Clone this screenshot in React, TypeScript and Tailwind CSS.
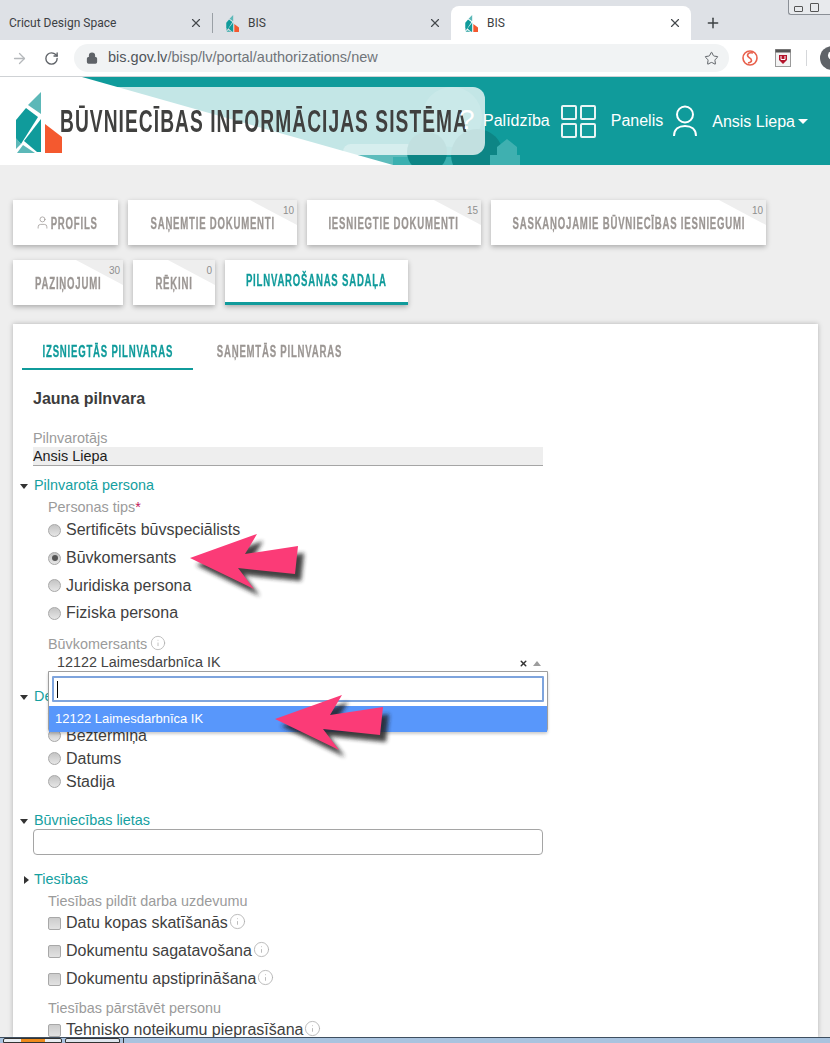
import React from "react";
import { ArrowRight, RotateCw, Lock, Star, X, Plus, Info, User } from "lucide-react";

const arial = "font-['Liberation_Sans',Arial,sans-serif]";

function Logo({ w, h }: { w: number; h: number }) {
  return (
    <svg width={w} height={h} viewBox="0 0 47 61" className="block shrink-0">
      <path d="M26 0V22L13 13Z" fill="#5cb8b8" />
      <path d="M11 16L1 28V47L6 52L23 25Z" fill="#109b9b" />
      <path d="M26 27V60H22L9 49Z" fill="#109b9b" />
      <path d="M1 46L6 52L1 57Z" fill="#5cb8b8" />
      <path d="M2 61L8 53L20 61Z" fill="#5cb8b8" />
      <path d="M30 32L47 45V61H30Z" fill="#f4592f" />
    </svg>
  );
}

function BrowserTab({ label, icon, active, divider, w }: { label: string; icon?: boolean; active?: boolean; divider?: boolean; w: string }) {
  return (
    <div className={`relative flex h-[34px] items-center pl-[9px] pr-[9px] ${w} ${active ? "rounded-t-lg bg-white" : ""}`}>
      {divider && <div className="absolute left-0 top-[7px] h-[20px] w-px bg-[#9aa0a6]" />}
      {icon && (
        <span className="ml-[5px] mr-[9px]">
          <Logo w={13} h={17} />
        </span>
      )}
      <span className="flex-1 font-['Roboto',sans-serif] text-[12px] text-[#3c4043]">{label}</span>
      <X size={14} strokeWidth={2} className="shrink-0 text-[#45494d]" />
    </div>
  );
}

function Cond({ children, className = "" }: { children: React.ReactNode; className?: string }) {
  return <span className={`inline-block scale-x-[0.6] whitespace-nowrap [-webkit-text-stroke:0.3px] ${className}`}>{children}</span>;
}

function Tile({ label, badge, active, w, icon }: { label: string; badge?: string; active?: boolean; w: string; icon?: boolean }) {
  return (
    <div
      className={`relative flex h-[45px] items-center justify-center overflow-hidden bg-white shadow-[0_2px_5px_rgba(0,0,0,0.28)] ${w} ${
        active ? "border-b-[3px] border-[#109b9b] text-[#109b9b]" : "text-[#9b9693]"
      } text-[16px] font-bold tracking-[1.3px]`}
    >
      {badge && (
        <>
          <svg className="absolute right-0 top-0" width="47" height="25" viewBox="0 0 47 25">
            <path d="M0 0H47V25Z" fill="#eeeeee" />
          </svg>
          <span className="absolute right-[3px] top-[3px] text-[10px] font-normal tracking-normal text-[#8f8f8f]">{badge}</span>
        </>
      )}
      {icon ? (
        <span className="flex items-center pt-[2px]">
          <User size={15} strokeWidth={1.2} className="mb-[2px] mr-[2px] shrink-0" />
          <span className="flex w-[45px] justify-center">
            <Cond>{label}</Cond>
          </span>
        </span>
      ) : (
        <span className={`flex justify-center ${active ? "" : "pt-[2px]"}`}>
          <Cond>{label}</Cond>
        </span>
      )}
    </div>
  );
}

function Section({ label, open = true, className }: { label: string; open?: boolean; className: string }) {
  return (
    <div className={`-ml-[2px] flex items-center ${className}`}>
      <span className="flex w-[14px] items-center">
        {open ? (
          <span className="h-0 w-0 border-x-[4px] border-t-[5px] border-x-transparent border-t-[#333]" />
        ) : (
          <span className="ml-[4px] h-0 w-0 border-y-[4px] border-l-[5px] border-y-transparent border-l-[#333]" />
        )}
      </span>
      <span className="text-[14.4px] text-[#15a0a0]">{label}</span>
    </div>
  );
}

function Radio({ label, checked, h = "h-[28px]" }: { label: string; checked?: boolean; h?: string }) {
  return (
    <div className={`flex items-center pl-[15px] ${h}`}>
      <span className="flex h-[13px] w-[13px] shrink-0 items-center justify-center rounded-full border border-[#a8a8a8] bg-gradient-to-b from-[#c4c4c4] to-[#e6e6e6]">
        {checked && <span className="h-[6px] w-[6px] rounded-full bg-[#555]" />}
      </span>
      <span className="ml-[5px] text-[16px] text-[#3f3f3f]">{label}</span>
    </div>
  );
}

function Check({ label, h = "h-[28px]" }: { label: string; h?: string }) {
  return (
    <div className={`flex items-center pl-[15px] ${h}`}>
      <span className="h-[13px] w-[13px] shrink-0 rounded-[2px] border border-[#a8a8a8] bg-gradient-to-b from-[#cccccc] to-[#e2e2e2]" />
      <span className="ml-[5px] text-[16px] text-[#3f3f3f]">{label}</span>
      <Info size={17} strokeWidth={1.2} className="mb-[3px] ml-[1px] shrink-0 text-[#b0b0b0]" />
    </div>
  );
}

function PinkArrow({ className }: { className: string }) {
  return (
    <svg className={`absolute ${className}`} width="130" height="80" viewBox="0 0 130 80">
      <defs>
        <filter id="blurArrow" x="-20%" y="-20%" width="140%" height="140%">
          <feGaussianBlur stdDeviation="2" />
        </filter>
      </defs>
      <path d="M5 28L72 4L60 24L113 16L110 44L53 38L69 59Z" transform="translate(6 7)" fill="#222" opacity="0.85" filter="url(#blurArrow)" />
      <path d="M5 28L72 4L60 24L113 16L110 44L53 38L69 59Z" fill="#fb3b77" />
    </svg>
  );
}

const label14 = "text-[14.4px] text-[#9b9b9b]";

export default function App() {
  return (
    <div className={`flex h-[1043px] w-[830px] flex-col overflow-hidden bg-[#eeeeee] ${arial}`}>
      {/* tab strip */}
      <div className="relative flex h-[40px] shrink-0 items-end bg-[#dee1e6]">
        <BrowserTab label="Cricut Design Space" w="w-[212px]" />
        <BrowserTab label="BIS" icon divider w="w-[239px]" />
        <BrowserTab label="BIS" icon active w="w-[240px]" />
        <div className="flex h-[34px] items-center pl-[14px]">
          <Plus size={16} strokeWidth={2.2} className="text-[#3c4043]" />
        </div>
        <div className="absolute right-0 top-0 flex h-[15px] w-[42px] rounded-bl-[3px] border-b border-l border-[#8a8f96] bg-[#e8eaed] pl-[5px] pt-[3px]">
          <span className="mt-[3px] h-[6px] w-[9px] rounded-[1px] border border-[#555]" />
          <span className="ml-[7px] h-[9px] w-[9px] rounded-[1px] border border-[#555]" />
        </div>
      </div>

      {/* toolbar */}
      <div className="flex h-[36px] shrink-0 items-center overflow-hidden bg-white">
        <ArrowRight size={17} strokeWidth={1.8} className="ml-[11px] shrink-0 text-[#b5b8bb]" />
        <RotateCw size={15} strokeWidth={2.2} className="ml-[16px] shrink-0 text-[#5f6368]" />
        <div className="ml-[15px] flex h-[28px] w-[655px] shrink-0 items-center rounded-full bg-[#f1f3f4] pl-[12px] pr-[10px]">
          <Lock size={12} strokeWidth={2.5} fill="#5f6368" className="shrink-0 text-[#5f6368]" />
          <span className="ml-[10px] flex-1 text-[14.5px] text-[#50555a]">
            bis.gov.lv<span className="text-[#70757a]">/bisp/lv/portal/authorizations/new</span>
          </span>
          <Star size={15} strokeWidth={1.6} className="shrink-0 text-[#5f6368]" />
        </div>
        <svg className="ml-[13px] shrink-0" width="16" height="18" viewBox="0 0 16 18">
          <circle cx="8" cy="9" r="7" fill="none" stroke="#e8604c" strokeWidth="1.6" />
          <path d="M11 4C6 3 4 6 7 8.500C10 10 11 13 6 14" fill="none" stroke="#e8604c" strokeWidth="1.6" />
        </svg>
        <svg className="ml-[17px] shrink-0" width="16" height="18" viewBox="0 0 16 18">
          <rect x="0.5" y="0.5" width="15" height="17" fill="#f3f3f3" stroke="#9a9a9a" />
          <rect x="0.500" y="0.5" width="15" height="3" fill="#555" />
          <path d="M4 6H12V11L8 15L4 11Z" fill="#b3142c" />
          <path d="M6 7V10.5H10V7" fill="none" stroke="#fff" />
        </svg>
        <div className="ml-[15px] h-[16px] w-px shrink-0 bg-[#d5d7da]" />
        <div className="ml-[13px] flex h-[24px] w-[24px] shrink-0 items-start justify-center overflow-hidden rounded-full bg-[#5f6368]">
          <span className="mt-[5px] h-[9px] w-[9px] rounded-full bg-white" />
        </div>
      </div>
      <div className="h-[1px] shrink-0 bg-[#cfd2d5]" />

      {/* header */}
      <div className="relative flex h-[88px] shrink-0 items-center overflow-hidden bg-[#109b9b]">
        <svg className="absolute inset-0" width="830" height="88" viewBox="0 0 830 88">
          <circle cx="452" cy="40" r="30" fill="#2ea8a8" />
          <rect x="343" y="67" width="100" height="30" rx="8" fill="#5dbcbc" />
          <rect x="393" y="80" width="127" height="8" fill="#3ab0b0" />
          <circle cx="427" cy="75" r="20" fill="#0d8585" />
          <circle cx="477" cy="78" r="26" fill="#0d8585" />
          <path d="M490 88V78H497V70L507 62L517 70V78H520V88Z" fill="#3fb0b0" />
          <path d="M0 0H82L393 88H0Z" fill="#fff" />
        </svg>
        <div className="absolute left-0 top-[10px] h-[68px] w-[485px] rounded-r-xl bg-white/75" />
        <span className="relative ml-[15px] mt-[2px]">
          <Logo w={47} h={61} />
        </span>
        <span className="relative -ml-[2px] origin-left scale-x-[0.6] whitespace-nowrap text-[32px] font-bold leading-none tracking-[1.75px] text-[#40403f]">
          BŪVNIECĪBAS INFORMĀCIJAS SISTĒMA
        </span>
        <span className="absolute left-[459px] top-[29px] text-[28px] leading-none text-white">?</span>
        <div className="absolute left-[483px] top-0 flex h-full items-center text-white">
          <span className="text-[16px]">Palīdzība</span>
          <span className="ml-[11px] grid h-[33px] w-[35px] grid-cols-2 gap-[3px]">
            <span className="rounded-[2px] border-2 border-white/90" />
            <span className="rounded-[2px] border-2 border-white/90" />
            <span className="rounded-[2px] border-2 border-white/90" />
            <span className="rounded-[2px] border-2 border-white/90" />
          </span>
          <span className="ml-[15px] text-[16px]">Panelis</span>
          <svg className="ml-[10px]" width="24" height="32" viewBox="0 0 24 32" fill="none" stroke="#fff" strokeWidth="2">
            <circle cx="12" cy="9.5" r="8" />
            <path d="M1 31C1 24 6 21 12 21C18 21 23 24 23 31" />
          </svg>
          <span className="ml-[15px] mt-[1px] text-[16px]">Ansis Liepa</span>
          <span className="ml-[3px] h-0 w-0 border-x-[5px] border-t-[5px] border-x-transparent border-t-white" />
        </div>
      </div>

      {/* page */}
      <div className="flex min-h-0 flex-1 flex-col overflow-hidden pl-[13px] pr-[12px] pt-[35px]">
        <div className="flex shrink-0 gap-[10px]">
          <Tile label="PROFILS" w="w-[105px]" icon />
          <Tile label="SAŅEMTIE DOKUMENTI" badge="10" w="w-[169px]" />
          <Tile label="IESNIEGTIE DOKUMENTI" badge="15" w="w-[174px]" />
          <Tile label="SASKAŅOJAMIE BŪVNIECĪBAS IESNIEGUMI" badge="10" w="w-[275px]" />
        </div>
        <div className="mt-[15px] flex shrink-0 gap-[10px]">
          <Tile label="PAZIŅOJUMI" badge="30" w="w-[110px]" />
          <Tile label="RĒĶINI" badge="0" w="w-[82px]" />
          <Tile label="PILNVAROŠANAS SADAĻA" active w="w-[183px]" />
        </div>

        <div className="relative mt-[19px] min-h-0 flex-1 bg-white pl-[9px] shadow-[0_0_5px_rgba(0,0,0,0.25)]">
          <div className="flex h-[46px] text-[16px] font-bold tracking-[1.3px]">
            <div className="flex w-[171px] items-center justify-center border-b-2 border-[#109b9b] pt-[12px] text-[#109b9b]">
              <Cond>IZSNIEGTĀS PILNVARAS</Cond>
            </div>
            <div className="ml-[24px] flex w-[125px] items-center justify-center pt-[10px] text-[#9b9693]">
              <Cond>SAŅEMTĀS PILNVARAS</Cond>
            </div>
          </div>

          <div className="w-[521px]">
            <h2 className="ml-[11px] mt-[20px] text-[16px] font-bold leading-[18px] text-[#3c3c3c]">Jauna pilnvara</h2>
            <div className={`${label14} ml-[11px] mt-[22px] leading-[16px]`}>Pilnvarotājs</div>
            <div className="ml-[11px] mt-[1px] h-[19px] border-b border-[#a5a5a5] bg-[#eeeeee] text-[14.4px] leading-[18px] text-[#1c1c1c]">Ansis Liepa</div>

            <Section label="Pilnvarotā persona" className="mt-[9px] h-[22px]" />
            <div className="pl-[11px]">
              <div className={`${label14} h-[19px] pl-[15px] leading-[20px]`}>
                Personas tips<span className="text-[#c2185b]">*</span>
              </div>
              <Radio label="Sertificēts būvspeciālists" />
              <Radio label="Būvkomersants" checked />
              <Radio label="Juridiska persona" h="h-[27px]" />
              <Radio label="Fiziska persona" />
              <div className={`${label14} mt-[7px] flex h-[21px] items-center pl-[15px]`}>
                Būvkomersants
                <Info size={16} strokeWidth={1.2} className="mb-[3px] ml-[3px] shrink-0 text-[#b0b0b0]" />
              </div>
              <div className="flex h-[16px] items-center pl-[24px] pr-[2px] text-[14.35px] text-[#444]">
                <span className="flex-1">12122 Laimesdarbnīca IK</span>
                <X size={9} strokeWidth={4} className="mr-[5px] shrink-0 text-[#333]" />
                <span className="h-0 w-0 border-x-[4px] border-b-[5px] border-x-transparent border-b-[#9d9d9d]" />
              </div>
            </div>

            <Section label="Derīguma termiņš" className="mt-[15px] h-[22px]" />
            <div className="pl-[11px]">
              <div className={`${label14} h-[16px] pl-[15px]`}>Termiņš</div>
              <Radio label="Beztermiņa" h="h-[23px]" />
              <Radio label="Datums" h="h-[23px]" />
              <Radio label="Stadija" h="h-[23px]" />
            </div>

            <Section label="Būvniecības lietas" className="mt-[16px] h-[20px] pt-[4px]" />
            <div className="ml-[11px] h-[26px] rounded-[4px] border border-[#a5a5a5] bg-white" />

            <Section label="Tiesības" open={false} className="mt-[14px] h-[22px]" />
            <div className="pl-[11px]">
              <div className={`${label14} h-[18px] pl-[15px] leading-[20px]`}>Tiesības pildīt darba uzdevumu</div>
              <Check label="Datu kopas skatīšanās" />
              <Check label="Dokumentu sagatavošana" />
              <Check label="Dokumentu apstiprināšana" />
              <div className={`${label14} mt-[5px] h-[20px] pl-[15px] leading-[20px]`}>Tiesības pārstāvēt personu</div>
              <Check label="Tehnisko noteikumu pieprasīšana" h="h-[24px]" />
            </div>
          </div>

          {/* open select dropdown */}
          <div className="absolute left-[35px] top-[347px] h-[61px] w-[500px] rounded-b-[3px] border border-[#9e9e9e] bg-white shadow-[0_2px_3px_rgba(0,0,0,0.2)]">
            <div className="mx-[3px] mt-[4px] flex h-[26px] items-center rounded-[1px] border-2 border-[#7ea4dd] pl-[3px]">
              <span className="h-[17px] w-px bg-black" />
            </div>
            <div className="mt-[4px] flex h-[26px] items-center bg-[#5897fb] pl-[6px] text-[13px] text-white">12122 Laimesdarbnīca IK</div>
          </div>

          <PinkArrow className="left-[172px] top-[206px]" />
          <PinkArrow className="left-[257px] top-[367px]" />
        </div>
      </div>

      {/* OS taskbar */}
      <div className="flex h-[6px] shrink-0 items-start border-t border-[#3f4f60] bg-[#a9c3df]">
        <span className="ml-[3px] flex h-[5px] w-[59px] justify-center rounded-t-[2px] border border-[#333] bg-[#e8edf2]">
          <span className="h-[3px] w-[24px] bg-[#ee8a1c]" />
        </span>
        <span className="ml-[3px] h-[5px] w-[55px] rounded-t-[2px] border border-[#333] bg-[#dfe6ee]" />
        <span className="ml-[3px] h-[5px] w-px bg-[#333]" />
      </div>
    </div>
  );
}
